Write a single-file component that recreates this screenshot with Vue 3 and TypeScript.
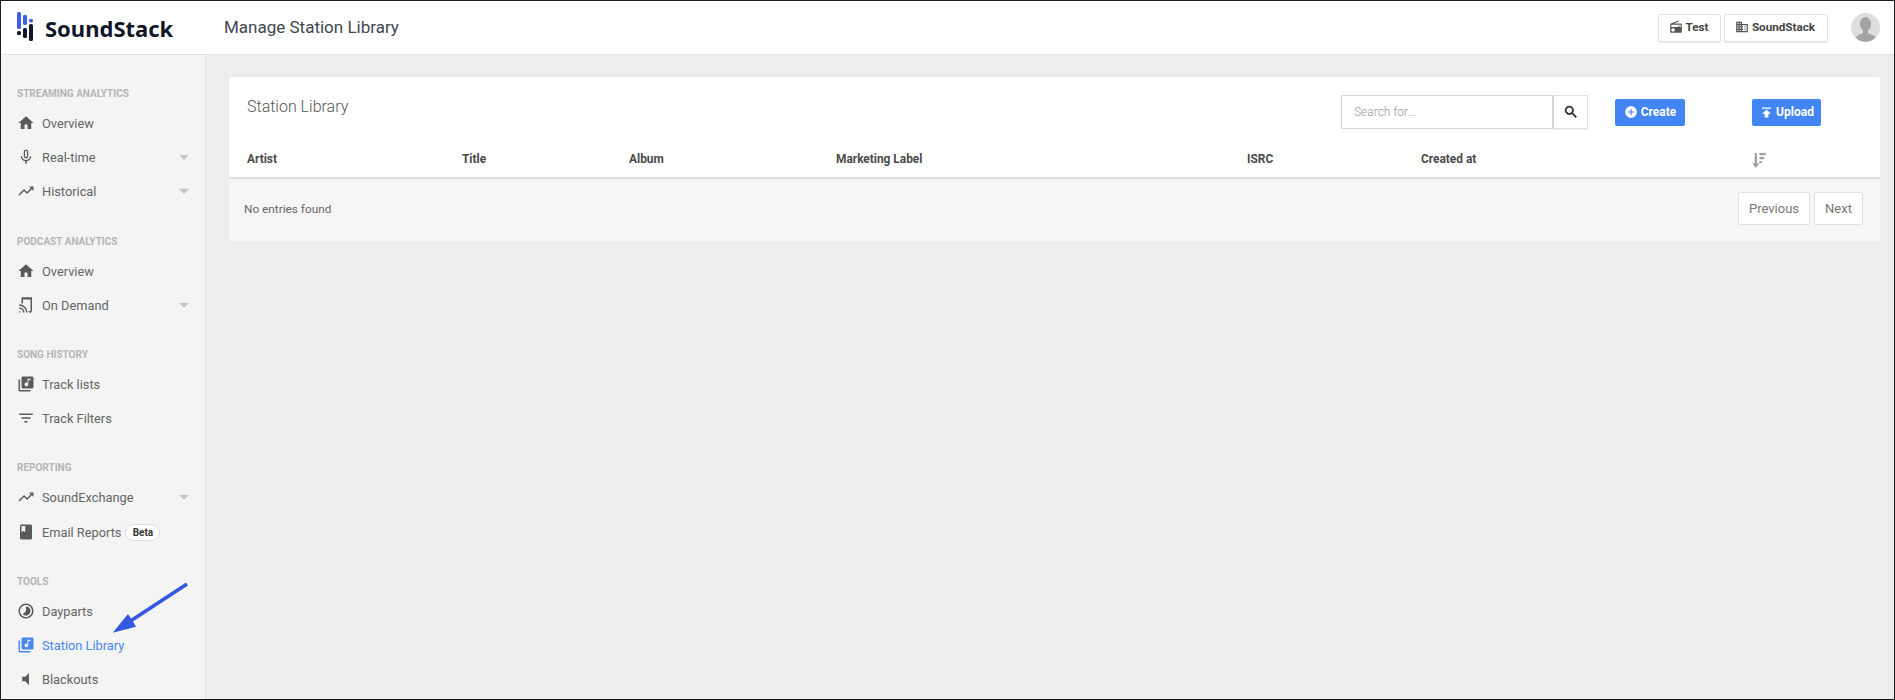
<script setup lang="ts">
interface NavItem { label: string; icon: string; caret?: boolean; badge?: string; active?: boolean; tall?: boolean }
interface NavSection { title: string; items: NavItem[] }

const I = {
  home: 'M10 20v-6h4v6h5v-8h3L12 3 2 12h3v8z',
  mic: 'M12 14c1.66 0 2.99-1.34 2.99-3L15 5c0-1.66-1.34-3-3-3S9 3.34 9 5v6c0 1.66 1.34 3 3 3zm-1.2-9.1c0-.66.54-1.2 1.2-1.2s1.2.54 1.2 1.2l-.01 6.2c0 .66-.53 1.2-1.19 1.2s-1.2-.54-1.2-1.2V4.9zm6.5 6.1c0 3-2.54 5.1-5.3 5.1S6.7 14 6.7 11H5c0 3.41 2.72 6.23 6 6.72V21h2v-3.28c3.28-.48 6-3.3 6-6.72h-1.7z',
  trend: 'M16 6l2.29 2.29-4.88 4.88-4-4L2 16.59 3.41 18l6-6 4 4 6.3-6.29L22 12V6z',
  lib: 'M20 2H8c-1.1 0-2 .9-2 2v12c0 1.1.9 2 2 2h12c1.1 0 2-.9 2-2V4c0-1.1-.9-2-2-2zm-2 5h-3v5.5c0 1.38-1.12 2.5-2.5 2.5S10 13.88 10 12.5s1.12-2.5 2.5-2.5c.57 0 1.08.19 1.5.51V5h4v2zM4 6H2v14c0 1.1.9 2 2 2h14v-2H4V6z',
  filter: 'M10 18h4v-2h-4v2zM3 6v2h18V6H3zm3 7h12v-2H6v2z',
  cast: 'M6 1.5h14v19h-2V4.5H8V10H6zM15 20h5l-2 2.7h-1zM3 20a2 2 0 0 1 2 2H3zM3 17a5 5 0 0 1 5 5h2a7 7 0 0 0-7-7zM3 13a9 9 0 0 1 9 9h2a11 11 0 0 0-11-11z',
  book: 'M18 2H6c-1.1 0-2 .9-2 2v16c0 1.1.9 2 2 2h12c1.1 0 2-.9 2-2V4c0-1.1-.9-2-2-2zM6 4h5v8l-2.5-1.5L6 12V4z',
  time: 'M16.24 7.76C15.07 6.59 13.54 6 12 6v6l-4.24 4.24c2.34 2.34 6.14 2.34 8.49 0 2.34-2.34 2.34-6.14-.01-8.48zM12 2C6.48 2 2 6.48 2 12s4.48 10 10 10 10-4.48 10-10S17.52 2 12 2zm0 18c-4.42 0-8-3.58-8-8s3.58-8 8-8 8 3.58 8 8-3.58 8-8 8z',
  mute: 'M7 9v6h4l5 5V4l-5 5H7z',
  radio: 'M3.24 6.15C2.51 6.43 2 7.17 2 8v12c0 1.1.89 2 2 2h16c1.11 0 2-.9 2-2V8c0-1.11-.89-2-2-2H8.3l8.26-3.34L15.88 1 3.24 6.15zM7 20c-1.66 0-3-1.34-3-3s1.34-3 3-3 3 1.34 3 3-1.34 3-3 3zm13-8h-2v-2h-2v2H4V8h16v4z',
  domain: 'M12 7V3H2v18h20V7H12zM6 19H4v-2h2v2zm0-4H4v-2h2v2zm0-4H4V9h2v2zm0-4H4V5h2v2zm4 12H8v-2h2v2zm0-4H8v-2h2v2zm0-4H8V9h2v2zm0-4H8V5h2v2zm10 12h-8v-2h2v-2h-2v-2h2v-2h-2V9h8v10zm-2-8h-2v2h2v-2zm0 4h-2v2h2v-2z',
  search: 'M15.5 14h-.79l-.28-.27C15.41 12.59 16 11.11 16 9.5 16 5.91 13.09 3 9.5 3S3 5.91 3 9.5 5.91 16 9.5 16c1.61 0 3.09-.59 4.23-1.57l.27.28v.79l5 4.99L20.49 19l-4.99-5zm-6 0C7.01 14 5 11.99 5 9.5S7.01 5 9.5 5 14 7.01 14 9.5 11.99 14 9.5 14z',
  add: 'M12 2C6.48 2 2 6.48 2 12s4.48 10 10 10 10-4.48 10-10S17.52 2 12 2zm5 11h-4v4h-2v-4H7v-2h4V7h2v4h4v2z',
  publish: 'M5 4v2h14V4H5zm0 10h4v6h6v-6h4l-7-7-7 7z',
  sort: 'M8 3h3v13h3l-4.5 6L5 16h3zM14 3h8v3h-8zM14 8h6v3h-6zM14 13h3v3h-3z'
}

const sections: NavSection[] = [
  { title: 'STREAMING ANALYTICS', items: [
    { label: 'Overview', icon: I.home },
    { label: 'Real-time', icon: I.mic, caret: true },
    { label: 'Historical', icon: I.trend, caret: true }
  ] },
  { title: 'PODCAST ANALYTICS', items: [
    { label: 'Overview', icon: I.home },
    { label: 'On Demand', icon: I.cast, caret: true }
  ] },
  { title: 'SONG HISTORY', items: [
    { label: 'Track lists', icon: I.lib },
    { label: 'Track Filters', icon: I.filter }
  ] },
  { title: 'REPORTING', items: [
    { label: 'SoundExchange', icon: I.trend, caret: true },
    { label: 'Email Reports', icon: I.book, badge: 'Beta', tall: true }
  ] },
  { title: 'TOOLS', items: [
    { label: 'Dayparts', icon: I.time },
    { label: 'Station Library', icon: I.lib, active: true },
    { label: 'Blackouts', icon: I.mute }
  ] }
]

const columns = [
  { label: 'Artist', width: 215 },
  { label: 'Title', width: 167 },
  { label: 'Album', width: 207 },
  { label: 'Marketing Label', width: 411 },
  { label: 'ISRC', width: 174 },
  { label: 'Created at', width: 331 }
]
</script>

<template>
  <div class="page">
    <header class="topbar">
      <div class="brand">
        <svg class="logo" width="16" height="30" viewBox="0 0 16 30">
          <rect x="0" y="0" width="4" height="17" rx="1.6" fill="#3b5fe8" />
          <rect x="6" y="3" width="4" height="10" rx="1.4" fill="#3b5fe8" />
          <rect x="12" y="7" width="4" height="3.4" rx="1.4" fill="#3b5fe8" />
          <rect x="0" y="19" width="4" height="4" rx="1.6" fill="#10162a" />
          <rect x="6" y="16" width="4" height="10" rx="1.6" fill="#10162a" />
          <rect x="12" y="12" width="4" height="17" rx="1.6" fill="#10162a" />
        </svg>
        <span class="brand-name">SoundStack</span>
      </div>
      <h1 class="page-title">Manage Station Library</h1>
      <div class="top-actions">
        <button class="top-btn test">
          <svg width="14" height="14" viewBox="0 0 24 24"><path :d="I.radio" /></svg>
          Test
        </button>
        <button class="top-btn org">
          <svg width="14" height="14" viewBox="0 0 24 24"><path :d="I.domain" /></svg>
          SoundStack
        </button>
        <div class="avatar">
          <svg width="29" height="29" viewBox="0 0 29 29">
            <ellipse cx="14.5" cy="11" rx="5.6" ry="7" fill="#a3a3a3" />
            <path d="M12 17h5v3c2 1.4 6 2 7.5 4.5A14 14 0 0 1 4.5 24.5C6 22 10 21.4 12 20z" fill="#a3a3a3" />
          </svg>
        </div>
      </div>
    </header>

    <div class="body">
      <aside class="sidebar">
        <section v-for="s in sections" :key="s.title" class="nav-section">
          <div class="nav-title">{{ s.title }}</div>
          <a
            v-for="item in s.items"
            :key="item.label"
            class="nav-item"
            :class="{ active: item.active, tall: item.tall }"
          >
            <svg class="nav-icon" width="18" height="18" viewBox="0 0 24 24"><path :d="item.icon" /></svg>
            <span>{{ item.label }}</span>
            <span v-if="item.badge" class="badge">{{ item.badge }}</span>
            <i v-if="item.caret" class="caret"></i>
          </a>
        </section>
      </aside>

      <main class="main">
        <div class="card">
          <div class="card-head">
            <h2 class="card-title">Station Library</h2>
            <div class="search">
              <div class="search-input">Search for...</div>
              <button class="search-btn">
                <svg width="16" height="16" viewBox="0 0 24 24"><path :d="I.search" /></svg>
              </button>
            </div>
            <button class="primary create">
              <svg width="14" height="14" viewBox="0 0 24 24"><path :d="I.add" /></svg>
              Create
            </button>
            <button class="primary upload">
              <svg width="15" height="15" viewBox="0 0 24 24"><path :d="I.publish" /></svg>
              Upload
            </button>
          </div>
          <div class="thead">
            <div v-for="c in columns" :key="c.label" class="th" :style="{ width: c.width + 'px' }">{{ c.label }}</div>
            <svg class="sort" width="14" height="15" viewBox="5 3 17 19"><path :d="I.sort" /></svg>
          </div>
          <div class="card-foot">
            <span class="empty">No entries found</span>
            <div class="pager">
              <button class="page-btn prev">Previous</button>
              <button class="page-btn next">Next</button>
            </div>
          </div>
        </div>
      </main>
    </div>

    <svg class="arrow" width="90" height="60" viewBox="0 0 90 60">
      <path d="M85 6.5 30 42.5 27 38 11.7 56.7 35 50.7 32 45.5 87 9.5z" fill="#3458e0" />
    </svg>
  </div>
</template>

<style>
html, body { margin: 0; padding: 0; background: #fff; }
</style>

<style scoped>
.page {
  position: relative;
  box-sizing: border-box;
  width: 1895px;
  height: 700px;
  border: 1px solid #1c1c1c;
  display: flex;
  flex-direction: column;
  overflow: hidden;
  font-family: Roboto, "Liberation Sans", sans-serif;
  color: #5f5f5f;
}
.topbar {
  box-sizing: border-box;
  height: 54px;
  flex: none;
  background: #fff;
  border-bottom: 1px solid #e3e3e3;
  display: flex;
  align-items: center;
}
.brand {
  display: flex;
  align-items: center;
  width: 223px;
  padding-left: 16px;
  box-sizing: border-box;
  flex: none;
}
.logo { flex: none; margin-top: -2px; }
.brand-name {
  margin-left: 12px;
  font-family: "Noto Sans", sans-serif;
  font-weight: 700;
  font-size: 22px;
  color: #10162a;
}
.page-title {
  margin: 0 0 2px;
  font-size: 17px;
  font-weight: 400;
  color: #414650;
}
.top-actions {
  margin-left: auto;
  display: flex;
  align-items: center;
  padding-right: 14px;
}
.top-btn {
  box-sizing: border-box;
  height: 28px;
  background: #fff;
  border: 1px solid #e2e2e2;
  border-radius: 2px;
  box-shadow: 0 1px 1px rgba(0,0,0,.08);
  display: flex;
  align-items: center;
  justify-content: center;
  gap: 3px;
  padding: 0 2px 2px 0;
  font: 700 11.7px Roboto, sans-serif;
  color: #444;
}
.top-btn svg { fill: #555; }
.test { width: 63px; margin-right: 3px; }
.org { width: 104px; margin-right: 23px; }
.avatar {
  width: 29px;
  height: 29px;
  border-radius: 50%;
  background: #dedede;
  overflow: hidden;
}
.avatar svg { display: block; }
.body { flex: 1; display: flex; min-height: 0; }
.sidebar {
  box-sizing: border-box;
  width: 205px;
  flex: none;
  background: #f4f4f4;
  border-right: 1px solid #e6e6e6;
  padding-top: 25px;
  overflow: hidden;
}
.nav-section { margin-bottom: 19px; }
.nav-section:first-child { margin-bottom: 20.4px; }
.nav-title {
  height: 26px;
  line-height: 28px;
  padding-left: 16px;
  font-size: 10px;
  font-weight: 700;
  color: #b5b5b5;
}
.nav-item {
  height: 34px;
  display: flex;
  align-items: center;
  position: relative;
  padding-left: 16px;
  font-size: 12.8px;
  color: #646464;
}
.nav-item.tall { box-sizing: border-box; height: 35px; padding-top: 1px; }
.nav-icon { flex: none; margin-right: 7px; fill: #5a5a5a; }
.nav-item.active { color: #4a86f0; }
.nav-item.active .nav-icon { fill: #4a86f0; }
.caret {
  position: absolute;
  right: 16px;
  top: 15px;
  width: 0;
  height: 0;
  border-left: 5px solid transparent;
  border-right: 5px solid transparent;
  border-top: 5px solid #c8c8c8;
}
.badge {
  margin-left: 4px;
  box-sizing: border-box;
  width: 35px;
  height: 17px;
  line-height: 15px;
  text-align: center;
  border: 1px solid #dcdcdc;
  border-radius: 9px;
  background: #fff;
  font-size: 10px;
  font-weight: 700;
  color: #333;
}
.main {
  flex: 1;
  background: #ededed;
  padding: 22px 14px 0 23px;
  min-width: 0;
}
.card {
  background: #fff;
  border-radius: 3px;
  overflow: hidden;
}
.card-head {
  box-sizing: border-box;
  height: 66px;
  display: flex;
  align-items: flex-start;
  padding-left: 18px;
  padding-right: 59px;
}
.card-title {
  margin: 20px auto 0 0;
  font-size: 16px;
  line-height: 19px;
  font-weight: 300;
  color: #555;
}
.search { display: flex; margin-top: 18px; }
.search-input {
  box-sizing: border-box;
  width: 213px;
  height: 34px;
  border: 1px solid #d5d5dd;
  border-right: 2px solid #d5d5dd;
  line-height: 32px;
  padding-left: 12px;
  font-size: 12px;
  font-weight: 300;
  color: #999;
}
.search-btn {
  box-sizing: border-box;
  width: 34px;
  height: 34px;
  background: #fff;
  border: 1px solid #e2e2e2;
  border-left: 0;
  box-shadow: 0 1px 1px rgba(0,0,0,.06);
  padding: 0;
  display: flex;
  align-items: center;
  justify-content: center;
}
.search-btn svg { fill: #222; stroke: #222; stroke-width: .6; }
.primary {
  box-sizing: border-box;
  margin-top: 22px;
  height: 27px;
  background: #4285f4;
  color: #fff;
  border: 0;
  border-radius: 2px;
  padding: 0 0 1px;
  display: flex;
  align-items: center;
  justify-content: center;
  gap: 3px;
  font: 700 12px Roboto, sans-serif;
}
.primary svg { fill: #fff; }
.create { width: 70px; margin-left: 27px; }
.upload { width: 69px; margin-left: 67px; gap: 2px; }
.thead {
  box-sizing: border-box;
  height: 36px;
  display: flex;
  align-items: center;
  padding-left: 18px;
  padding-bottom: 3px;
  border-bottom: 2px solid #dcdce4;
}
.th {
  flex: none;
  font-size: 11.9px;
  font-weight: 700;
  color: #4a4a4a;
}
.sort { fill: #a0a0a0; flex: none; margin-top: 3px; }
.card-foot {
  box-sizing: border-box;
  height: 62px;
  background: #f6f6f6;
  display: flex;
  align-items: center;
  padding: 0 17px 4px 15px;
}
.empty { font-size: 11.8px; color: #666; margin-top: 2px; }
.pager { margin-left: auto; display: flex; gap: 4px; }
.page-btn {
  box-sizing: border-box;
  height: 33px;
  background: #fff;
  border: 1px solid #e0e0e0;
  border-radius: 2px;
  padding: 0;
  font: 400 13px Roboto, sans-serif;
  color: #777;
}
.prev { width: 72px; }
.next { width: 49px; }
.arrow {
  position: absolute;
  left: 100px;
  top: 575px;
}
</style>
